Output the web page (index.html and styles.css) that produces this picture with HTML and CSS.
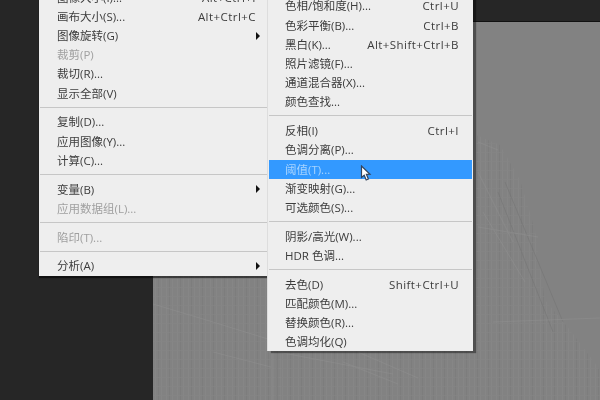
FILE: index.html
```html
<!DOCTYPE html>
<html lang="zh-CN">
    <head>
        <meta charset="UTF-8">
        <title>图像菜单</title>
        <link rel="stylesheet" href="styles.css">
    </head>
    <body>
        <div class="workspace">
            <div class="canvas">
                <svg class="canvas_lines" width="447" height="378" viewBox="0 0 447 378">
                    <defs>
                        <pattern id="weave" width="11" height="9" patternUnits="userSpaceOnUse">
                            <path d="M2.5 0 V9 M8.5 0 V9" stroke="#8d8d8d" stroke-width="1" fill="none"/>
                            <path d="M5.5 0 V9" stroke="#767676" stroke-width="1" fill="none"/>
                            <path d="M0 4.5 H11" stroke="#8a8a8a" stroke-width="0.6" fill="none"/>
                        </pattern>
                    </defs>
                    <polygon points="323,113 347,123 367,158 382,208 392,278 417,308 447,348 447,378 0,378 0,253 323,253" fill="url(#weave)" opacity="0.38"/>
                    <g fill="none" stroke-width="1" opacity="0.45">
                        <path stroke="#929292" d="M0 282 L60 300 L118 318 M125 330 L240 352 M60 330 L118 345"/>
                        <path stroke="#929292" d="M120 255 V378 M127 255 V378"/>
                        <path stroke="#717171" d="M124 255 V378 M345 170 L400 310 M352 160 L410 300"/>
                        <path stroke="#929292" d="M190 340 L245 362 M205 330 L265 356 M330 190 L372 260 M340 300 L447 296"/>
                        <path stroke="#929292" d="M325 120 L345 128 M325 150 L360 220 M325 205 L385 215"/>
                    </g>
                </svg>
            </div>
        </div>

        <div class="menu menu_left">
            <div class="row"><span>图像大小(I)...</span><span class="keys">Alt+Ctrl+I</span></div>
            <div class="row"><span>画布大小(S)...</span><span class="keys">Alt+Ctrl+C</span></div>
            <div class="row"><span>图像旋转(G)</span><span class="arrow"></span></div>
            <div class="row off"><span>裁剪(P)</span></div>
            <div class="row"><span>裁切(R)...</span></div>
            <div class="row"><span>显示全部(V)</span></div>
            <div class="sep"></div>
            <div class="row"><span>复制(D)...</span></div>
            <div class="row"><span>应用图像(Y)...</span></div>
            <div class="row"><span>计算(C)...</span></div>
            <div class="sep"></div>
            <div class="row"><span>变量(B)</span><span class="arrow"></span></div>
            <div class="row off"><span>应用数据组(L)...</span></div>
            <div class="sep"></div>
            <div class="row off"><span>陷印(T)...</span></div>
            <div class="sep"></div>
            <div class="row"><span>分析(A)</span><span class="arrow"></span></div>
        </div>

        <div class="menu menu_right">
            <div class="row"><span>色相/饱和度(H)...</span><span class="keys">Ctrl+U</span></div>
            <div class="row"><span>色彩平衡(B)...</span><span class="keys">Ctrl+B</span></div>
            <div class="row"><span>黑白(K)...</span><span class="keys">Alt+Shift+Ctrl+B</span></div>
            <div class="row"><span>照片滤镜(F)...</span></div>
            <div class="row"><span>通道混合器(X)...</span></div>
            <div class="row"><span>颜色查找...</span></div>
            <div class="sep"></div>
            <div class="row"><span>反相(I)</span><span class="keys">Ctrl+I</span></div>
            <div class="row"><span>色调分离(P)...</span></div>
            <div class="row active"><span>阈值(T)...</span></div>
            <div class="row"><span>渐变映射(G)...</span></div>
            <div class="row"><span>可选颜色(S)...</span></div>
            <div class="sep"></div>
            <div class="row"><span>阴影/高光(W)...</span></div>
            <div class="row"><span>HDR 色调...</span></div>
            <div class="sep"></div>
            <div class="row"><span>去色(D)</span><span class="keys">Shift+Ctrl+U</span></div>
            <div class="row"><span>匹配颜色(M)...</span></div>
            <div class="row"><span>替换颜色(R)...</span></div>
            <div class="row"><span>色调均化(Q)</span></div>
        </div>

        <svg class="cursor" width="12" height="17" viewBox="0 0 12 17">
            <path d="M1.5 1 L1.5 12.5 L4.2 10.2 L6.2 15 L8.4 14 L6.4 9.4 L10 9.2 Z" fill="#ffffff" stroke="#33445c" stroke-width="1.2"/>
        </svg>
    </body>
</html>
```

FILE: styles.css
```css
html, body {
    width: 600px;
    height: 400px;
    margin: 0px;
    padding: 0px;
    overflow: hidden;
    background: #262626;
}

.workspace {
    height: 378px;
    padding: 22px 0px 0px 153px;
}

.canvas {
    height: 378px;
    background: #828282;
    box-shadow: 0px -1px 0px #111111;
    filter: blur(0.6px);
}

.canvas_lines {
    display: block;
}

.menu {
    position: absolute;
    background: #eeeeee;
    font-family: "Open Sans", "Noto Sans CJK SC", sans-serif;
    font-size: 11.5px;
    color: #3c3c3c;
    filter: blur(0.4px);
}

.menu_left {
    width: 229px;
    top: -12.3px;
    left: 39px;
    box-shadow: 0px 2px 1px rgba(0, 0, 0, 0.55);
}

.menu_right {
    width: 205px;
    top: -3.6px;
    left: 268px;
    box-shadow: 3px 2px 1px rgba(0, 0, 0, 0.4), -1px 0px 0px #dddddd;
}

.row {
    height: 19.2px;
    line-height: 19.2px;
    padding: 0px 12px 0px 18px;
    display: flex;
    justify-content: space-between;
    align-items: center;
    white-space: nowrap;
}

.menu_right .row {
    padding: 0px 13px 0px 16px;
    margin: 0px 1px;
}

.off { color: #a0a0a0; }

.active {
    background: #3399ff;
    color: #a8d4ff;
}

.keys { letter-spacing: 0.45px; }

.arrow {
    width: 0px;
    height: 0px;
    margin-right: -4px;
    border-left: 4px solid #111111;
    border-top: 4px solid transparent;
    border-bottom: 4px solid transparent;
}

.sep {
    height: 1px;
    margin: 3.8px 1px 4.8px 1px;
    background: #c6c6c6;
}

.cursor {
    position: absolute;
    top: 165px;
    left: 360px;
}
```
